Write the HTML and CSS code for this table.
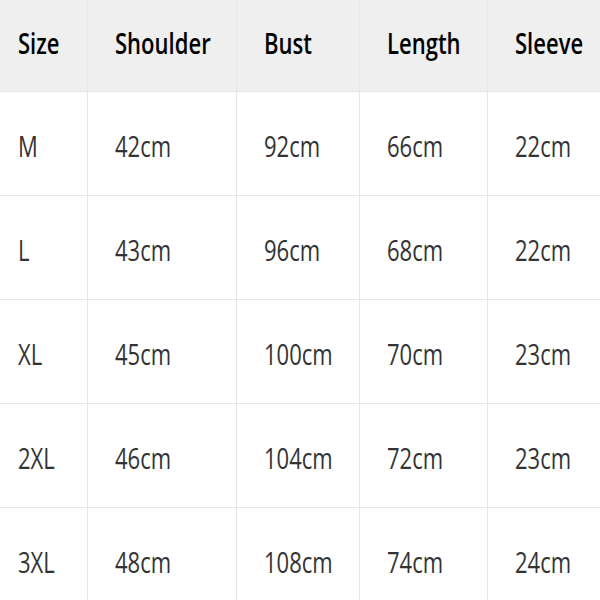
FILE: index.html
```html
<!DOCTYPE html>
<html>
<head>
<meta charset="utf-8">
<link rel="stylesheet" href="styles.css">
</head>
<body>
<div class="table">
  <div class="cell head first"><span class="t">Size</span></div>
  <div class="cell head"><span class="t">Shoulder</span></div>
  <div class="cell head"><span class="t">Bust</span></div>
  <div class="cell head"><span class="t">Length</span></div>
  <div class="cell head"><span class="t">Sleeve</span></div>

  <div class="cell first"><span class="t">M</span></div>
  <div class="cell"><span class="t">42cm</span></div>
  <div class="cell"><span class="t">92cm</span></div>
  <div class="cell"><span class="t">66cm</span></div>
  <div class="cell"><span class="t">22cm</span></div>

  <div class="cell first"><span class="t">L</span></div>
  <div class="cell"><span class="t">43cm</span></div>
  <div class="cell"><span class="t">96cm</span></div>
  <div class="cell"><span class="t">68cm</span></div>
  <div class="cell"><span class="t">22cm</span></div>

  <div class="cell first"><span class="t">XL</span></div>
  <div class="cell"><span class="t">45cm</span></div>
  <div class="cell"><span class="t">100cm</span></div>
  <div class="cell"><span class="t">70cm</span></div>
  <div class="cell"><span class="t">23cm</span></div>

  <div class="cell first"><span class="t">2XL</span></div>
  <div class="cell"><span class="t">46cm</span></div>
  <div class="cell"><span class="t">104cm</span></div>
  <div class="cell"><span class="t">72cm</span></div>
  <div class="cell"><span class="t">23cm</span></div>

  <div class="cell first"><span class="t">3XL</span></div>
  <div class="cell"><span class="t">48cm</span></div>
  <div class="cell"><span class="t">108cm</span></div>
  <div class="cell"><span class="t">74cm</span></div>
  <div class="cell"><span class="t">24cm</span></div>
</div>
</body>
</html>
```
FILE: styles.css
```css
html, body {
  margin: 0;
  padding: 0;
  background: #ffffff;
}
body {
  width: 600px;
  height: 600px;
  overflow: hidden;
  font-family: "Open Sans", "Noto Sans", sans-serif;
}
.table {
  display: grid;
  grid-template-columns: 87px 148px 122px 127px 112px;
  grid-template-rows: 91px repeat(5, 103px);
  gap: 1px;
  background: #e6e6e6;
  width: 600px;
}
.cell {
  background: #ffffff;
  display: flex;
  align-items: center;
  padding-left: 27px;
  padding-top: 4px;
  font-size: 29px;
  color: #333333;
  overflow: hidden;
}
.cell.first {
  padding-left: 18px;
}
.cell.head {
  background: #efefef;
  color: #000000;
  font-weight: 600;
  padding-top: 0;
  padding-bottom: 7px;
}
.t {
  display: inline-block;
  white-space: nowrap;
  transform: scaleX(0.76);
  transform-origin: left center;
}
```
